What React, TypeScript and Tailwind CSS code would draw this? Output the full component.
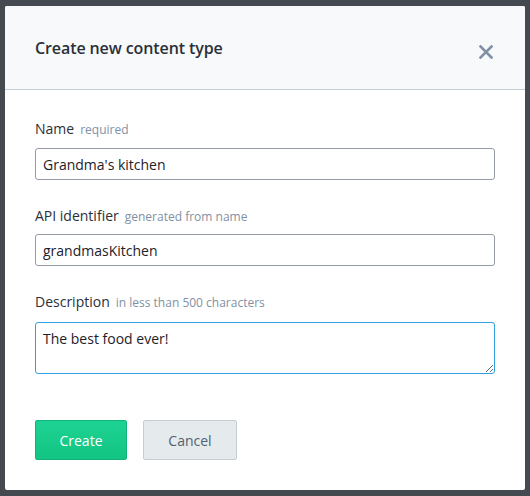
export default function App() {
  return (
    <div
      className="flex h-[496px] w-[530px] bg-[#454950] px-[5px] pt-[6px] pb-[6px]"
      style={{ fontFamily: "'Open Sans', 'Liberation Sans', sans-serif" }}
    >
      <div className="flex w-full flex-col overflow-hidden rounded-[2px] bg-white">
        <header className="flex h-[84px] items-center justify-between border-b border-[#c3cfd5] bg-[#f7f9fa] pl-[30px] pr-[32px]">
          <h1 className="text-[16px] font-semibold tracking-[-0.1px] text-[#2a3039]">
            Create new content type
          </h1>
          <svg width="14" height="14" viewBox="0 0 14 14" className="mt-[8px]" aria-hidden>
            <path d="M1.5 1.5 L12.5 12.5 M12.5 1.5 L1.5 12.5" stroke="#8091a5" strokeWidth="2.6" strokeLinecap="square" />
          </svg>
        </header>

        <div className="flex flex-col px-[30px] pt-[28px]">
          <label className="flex items-baseline gap-[6px] text-[14px] text-[#2a3039]">
            Name <span className="text-[12px] text-[#8091a5]">required</span>
          </label>
          <input
            readOnly
            value="Grandma's kitchen"
            className="mt-[9px] h-[32px] w-[460px] rounded-[3px] border border-[#959ca5] px-[7px] text-[14px] text-[#1e2128] outline-none"
          />

          <label className="mt-[25px] flex items-baseline gap-[6px] text-[14px] text-[#2a3039]">
            API identifier <span className="text-[12px] text-[#8091a5]">generated from name</span>
          </label>
          <input
            readOnly
            value="grandmasKitchen"
            className="mt-[8px] h-[32px] w-[460px] rounded-[3px] border border-[#959ca5] px-[7px] text-[14px] text-[#1e2128] outline-none"
          />

          <label className="mt-[25px] flex items-baseline gap-[6px] text-[14px] text-[#2a3039]">
            Description <span className="text-[12px] text-[#8091a5]">in less than 500 characters</span>
          </label>
          <textarea
            readOnly
            value="The best food ever!"
            className="mt-[10px] h-[52px] w-[460px] rounded-[3px] border border-[#2da1e0] px-[7px] py-[5px] text-[14px] text-[#1e2128] outline-none"
          />

          <div className="mt-[46px] flex gap-[16px]">
            <button className="h-[40px] w-[92px] rounded-[2px] border border-[#12b37b] bg-gradient-to-b from-[#1dd394] to-[#13c482] text-[14px] text-white">
              Create
            </button>
            <button className="h-[40px] w-[94px] rounded-[2px] border border-[#c3cfd5] bg-[#e5ebed] text-[14px] text-[#536171]">
              Cancel
            </button>
          </div>
        </div>
      </div>
    </div>
  );
}
